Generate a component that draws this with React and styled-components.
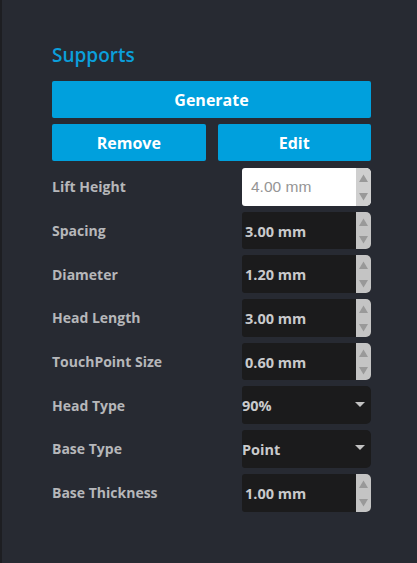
import React from "react";
import styled, { createGlobalStyle } from "styled-components";

const Global = createGlobalStyle`
  html, body { margin: 0; padding: 0; background: #272a32; }
  body { font-family: "Open Sans", "Noto Sans", sans-serif; }
`;

const Page = styled.div`
  width: 417px;
  height: 563px;
  box-sizing: border-box;
  background: #272a32;
  border-left: 2px solid #1d1e22;
  padding: 40px 46px 0 50px;
  display: flex;
  flex-direction: column;
`;

const Title = styled.h2`
  margin: 0 0 11px 0;
  height: 30px;
  font-size: 19px;
  font-weight: 600;
  color: #0b9fdb;
  line-height: 30px;
`;

const ButtonRow = styled.div`
  display: grid;
  grid-template-columns: ${(p) => (p.$cols === 2 ? "1fr 1fr" : "1fr")};
  gap: 12px;
  margin-bottom: 6px;
`;

const Button = styled.button`
  height: 37px;
  border: none;
  border-radius: 2px;
  background: #00a0dd;
  color: #ffffff;
  font-family: "Open Sans", "Noto Sans", sans-serif;
  font-weight: 700;
  font-size: 16px;
  padding: 0;
`;

const Fields = styled.div`
  display: flex;
  flex-direction: column;
  gap: 6px;
  margin-top: 1px;
`;

const Row = styled.div`
  display: grid;
  grid-template-columns: 190px 129px;
  align-items: center;
  height: 37.7px;
`;

const Label = styled.span`
  font-size: 14px;
  font-weight: 700;
  color: #b6b7ba;
`;

const Field = styled.div`
  height: 37.7px;
  display: flex;
  align-items: stretch;
  border-radius: 3px 5px 5px 3px;
  overflow: hidden;
  background: ${(p) => (p.$light ? "#ffffff" : "#1b1b1c")};
`;

const Value = styled.span`
  flex: 1;
  display: flex;
  align-items: center;
  padding-left: ${(p) => (p.$select ? "0" : p.$light ? "9px" : "3px")};
  font-family: ${(p) => (p.$light ? '"Liberation Sans", Arial, sans-serif' : '"Open Sans", "Noto Sans", sans-serif')};
  font-weight: ${(p) => (p.$light ? 400 : 700)};
  font-size: ${(p) => (p.$light ? "15.5px" : "14.5px")};
  color: ${(p) => (p.$light ? "#959595" : "#c9cacc")};
  padding-top: 1px;
`;

const Spinner = styled.div`
  width: 15px;
  background: ${(p) => (p.$light ? "#cfcfcf" : "#c4c4c4")};
  display: flex;
  flex-direction: column;
  justify-content: space-between;
  align-items: center;
  padding: 6px 0 5px;
`;

const Arrow = styled.svg`
  width: 9px;
  height: 8px;
  display: block;
`;

const Caret = styled.svg`
  width: 10px;
  height: 5px;
  align-self: center;
  margin-right: 6px;
  margin-top: -2px;
`;

const SpinBox = ({ value, light }) => (
  <Field $light={light}>
    <Value $light={light}>{value}</Value>
    <Spinner $light={light}>
      <Arrow viewBox="0 0 9 8">
        <path d="M4.5 0.5 L9 8 L0 8 Z" fill="#999" />
      </Arrow>
      <Arrow viewBox="0 0 9 8">
        <path d="M0 0 L9 0 L4.5 7.5 Z" fill="#999" />
      </Arrow>
    </Spinner>
  </Field>
);

const Select = ({ value }) => (
  <Field>
    <Value $select>{value}</Value>
    <Caret viewBox="0 0 10 5">
      <path d="M0 0 L10 0 L5 5 Z" fill="#c2c2c2" />
    </Caret>
  </Field>
);

const rows = [
  { label: "Lift Height", value: "4.00 mm", light: true },
  { label: "Spacing", value: "3.00 mm" },
  { label: "Diameter", value: "1.20 mm" },
  { label: "Head Length", value: "3.00 mm" },
  { label: "TouchPoint Size", value: "0.60 mm" },
  { label: "Head Type", value: "90%", select: true },
  { label: "Base Type", value: "Point", select: true },
  { label: "Base Thickness", value: "1.00 mm" },
];

export default function App() {
  return (
    <>
      <Global />
      <Page>
        <Title>Supports</Title>
        <ButtonRow>
          <Button>Generate</Button>
        </ButtonRow>
        <ButtonRow $cols={2}>
          <Button>Remove</Button>
          <Button>Edit</Button>
        </ButtonRow>
        <Fields>
          {rows.map((r) => (
            <Row key={r.label}>
              <Label>{r.label}</Label>
              {r.select ? <Select value={r.value} /> : <SpinBox value={r.value} light={r.light} />}
            </Row>
          ))}
        </Fields>
      </Page>
    </>
  );
}
